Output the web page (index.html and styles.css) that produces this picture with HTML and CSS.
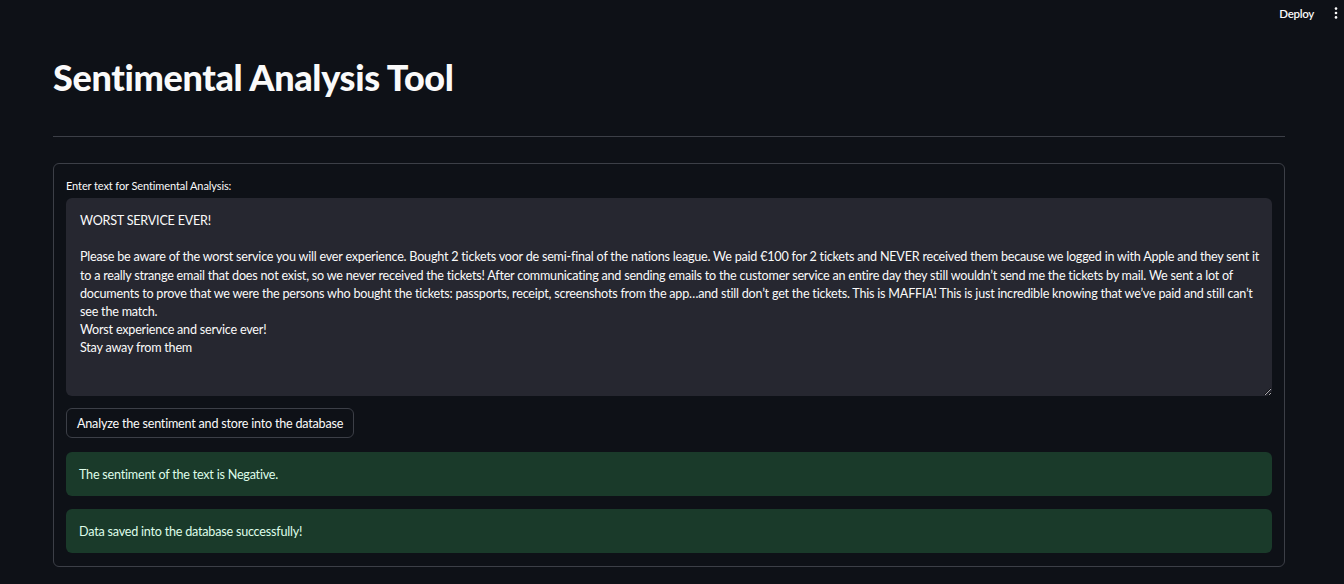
FILE: index.html
```html
<!DOCTYPE html>
<html lang="en">
<head>
<meta charset="utf-8">
<title>Sentimental Analysis Tool</title>
<link rel="stylesheet" href="styles.css">
</head>
<body>
<header class="topbar">
  <span class="deploy">Deploy</span>
  <span class="menu" aria-label="Main menu">
    <svg width="4" height="12" viewBox="0 0 4 12"><circle cx="2" cy="1.6" r="1.3" fill="#fafafa"/><circle cx="2" cy="6" r="1.3" fill="#fafafa"/><circle cx="2" cy="10.4" r="1.3" fill="#fafafa"/></svg>
  </span>
</header>
<main class="main">
  <h1 class="title">Sentimental Analysis Tool</h1>
  <hr class="divider">
  <form class="form">
    <label class="field">
      <span class="field-label">Enter text for Sentimental Analysis:</span>
      <textarea class="textarea" wrap="off">WORST SERVICE EVER!

Please be aware of the worst service you will ever experience. Bought 2 tickets voor de semi-final of the nations league. We paid €100 for 2 tickets and NEVER received them because we logged in with Apple and they sent it
to a really strange email that does not exist, so we never received the tickets! After communicating and sending emails to the customer service an entire day they still wouldn’t send me the tickets by mail. We sent a lot of
documents to prove that we were the persons who bought the tickets: passports, receipt, screenshots from the app…and still don’t get the tickets. This is MAFFIA! This is just incredible knowing that we’ve paid and still can’t
see the match.
Worst experience and service ever!
Stay away from them</textarea>
    </label>
    <div class="actions">
      <button type="button" class="btn">Analyze the sentiment and store into the database</button>
    </div>
    <div class="alert alert-first">The sentiment of the text is Negative.</div>
    <div class="alert">Data saved into the database successfully!</div>
  </form>
</main>
</body>
</html>
```
FILE: styles.css
```css
* { box-sizing: border-box; }
html, body { margin: 0; height: 100%; }
body {
  background: #0e1117;
  color: #fafafa;
  font-family: "Lato", "Open Sans", sans-serif;
  overflow: hidden;
}
.topbar {
  height: 26px;
  display: flex;
  justify-content: flex-end;
  align-items: center;
  gap: 20px;
  padding-right: 6px;
}
.deploy {
  font-size: 11.5px;
  font-weight: 600;
  letter-spacing: -0.3px;
  color: #fafafa;
}
.menu { display: flex; align-items: center; }
.main {
  padding: 29px 59px 0 53px;
}
.title {
  margin: 0;
  font-size: 36px;
  font-weight: 900;
  line-height: 44px;
  letter-spacing: -0.35px;
}
.divider {
  margin: 37px 0 26px;
  border: 0;
  height: 1px;
  background: #3c3f47;
}
.form {
  border: 1px solid #3c3f47;
  border-radius: 6px;
  padding: 13px 12px 13px 12px;
  display: flex;
  flex-direction: column;
  gap: 13px;
}
.field { display: flex; flex-direction: column; gap: 5px; }
.field-label {
  font-size: 11px;
  line-height: 14px;
  margin-top: 2px;
  letter-spacing: -0.1px;
}
.textarea {
  width: 100%;
  height: 198px;
  background: #262730;
  color: #fafafa;
  border: 0;
  border-radius: 6px;
  padding: 14px 14px;
  font-family: inherit;
  font-size: 12.6px;
  line-height: 18.2px;
  letter-spacing: -0.22px;
  resize: vertical;
  overflow: hidden;
  white-space: pre;
  outline: none;
}
.actions { display: flex; margin-top: -1px; }
.btn {
  height: 30px;
  padding: 0 10px;
  background: transparent;
  color: #fafafa;
  border: 1px solid #3c3f47;
  border-radius: 6px;
  font-family: inherit;
  font-size: 12.6px;
  letter-spacing: -0.22px;
}
.alert {
  height: 44px;
  display: flex;
  align-items: center;
  padding: 0 13px;
  background: rgb(26, 58, 42);
  color: rgb(223, 253, 233);
  border-radius: 6px;
  font-size: 12.6px;
  letter-spacing: -0.22px;
}
.alert-first { margin-top: 1px; }
```
